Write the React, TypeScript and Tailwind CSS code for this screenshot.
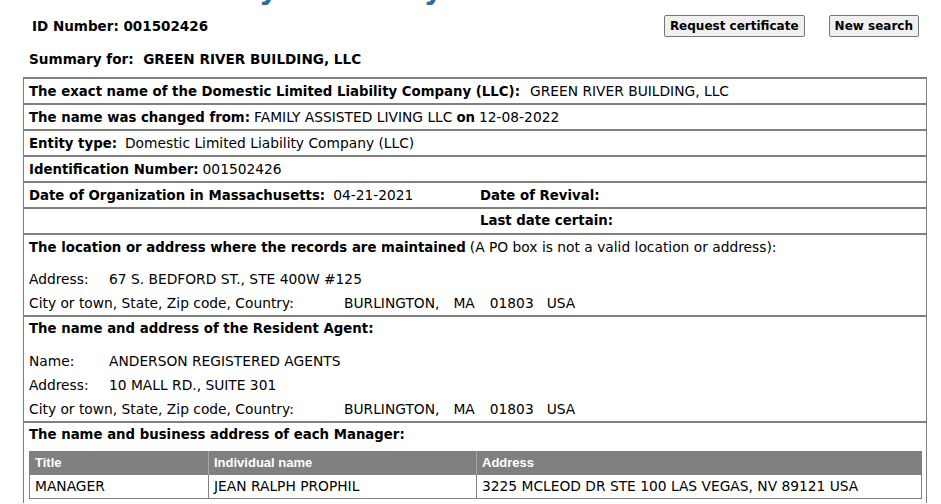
const FONT = "font-['DejaVu_Sans',Verdana,sans-serif]";

const B = ({ children, className = '' }: { children: React.ReactNode; className?: string }) => (
  <b className={`text-[13.3px] font-bold ${className}`}>{children}</b>
);

// one boxed row; inner div keeps bold and plain text on a shared baseline
const Row = ({ children }: { children: React.ReactNode }) => (
  <div className="flex h-[26px] items-center border-b-2 border-[#808080] px-[5px]">
    <div className="flex w-full items-baseline">{children}</div>
  </div>
);

const Line = ({ label, value }: { label: string; value: React.ReactNode }) => (
  <div className="flex h-[24px] items-center">
    <span className="w-[80px]">{label}</span>
    <span>{value}</span>
  </div>
);

const CityLine = () => (
  <div className="flex h-[24px] items-center">
    <span className="w-[315px]">City or town, State, Zip code, Country:</span>
    <span>BURLINGTON,</span>
    <span className="ml-[14px]">MA</span>
    <span className="ml-[15px]">01803</span>
    <span className="ml-[13px]">USA</span>
  </div>
);

export default function App() {
  return (
    <div className={`${FONT} min-h-screen w-[941px] overflow-hidden bg-white text-[13.8px] text-black`}>
      {/* page title, mostly scrolled out of view */}
      <h1 className="-mt-[27px] h-[32px] pl-[26px] text-[29px] font-bold leading-[32px] text-[#2e6b9e]">
        Business Entity Summary
      </h1>

      <div className="mt-[6px] flex h-[30px] items-center pl-[32px] pr-[22px]">
        <B className="text-[13.5px]">ID Number: 001502426</B>
        <div className="ml-auto flex gap-[24px]">
          <button className="h-[22px] rounded-[2px] border border-[#767676] bg-[#efefef] px-[5px] text-[12px] font-bold">
            Request certificate
          </button>
          <button className="h-[22px] rounded-[2px] border border-[#767676] bg-[#efefef] px-[5px] text-[12px] font-bold">
            New search
          </button>
        </div>
      </div>

      <div className="flex h-[36px] items-center pl-[29px] text-[13.6px] font-bold">
        Summary for:&nbsp; GREEN RIVER BUILDING, LLC
      </div>

      <div className="ml-[23px] w-[904px] border-x border-t-2 border-[#808080]">
        <Row>
          <B>The exact name of the Domestic Limited Liability Company (LLC):</B>
          <span className="ml-[10px]">GREEN RIVER BUILDING, LLC</span>
        </Row>
        <Row>
          <B>The name was changed from:</B>
          <span className="ml-[4px]">FAMILY ASSISTED LIVING LLC</span>
          <B className="ml-[4px]">on</B>
          <span className="ml-[4px]">12-08-2022</span>
        </Row>
        <Row>
          <B>Entity type:</B>
          <span className="ml-[8px]">Domestic Limited Liability Company (LLC)</span>
        </Row>
        <Row>
          <B>Identification Number:</B>
          <span className="ml-[4px]">001502426</span>
        </Row>
        <Row>
          <div className="w-[451px]">
            <B>Date of Organization in Massachusetts:</B>
            <span className="ml-[8px]">04-21-2021</span>
          </div>
          <B>Date of Revival:</B>
        </Row>
        <Row>
          <div className="w-[451px]" />
          <B>Last date certain:</B>
        </Row>

        <div className="border-b-2 border-[#808080] px-[5px]">
          <div className="flex h-[24px] items-center">
            <div className="flex items-baseline">
              <B>The location or address where the records are maintained</B>
              <span className="ml-[4px]">(A PO box is not a valid location or address):</span>
            </div>
          </div>
          <div className="mt-[8px]">
            <Line label="Address:" value="67 S. BEDFORD ST., STE 400W #125" />
            <CityLine />
          </div>
        </div>

        <div className="border-b-2 border-[#808080] px-[5px]">
          <div className="flex h-[24px] items-center">
            <B>The name and address of the Resident Agent:</B>
          </div>
          <div className="mt-[8px]">
            <Line label="Name:" value="ANDERSON REGISTERED AGENTS" />
            <Line label="Address:" value="10 MALL RD., SUITE 301" />
            <CityLine />
          </div>
        </div>

        <div className="px-[5px] pb-[4px]">
          <div className="flex h-[24px] items-center">
            <B>The name and business address of each Manager:</B>
          </div>
          <table className="mt-[4px] w-[893px] border-collapse border border-[#808080]">
            <thead>
              <tr className="h-[23px] bg-[#808080] text-left font-['Liberation_Sans',Arial,sans-serif] text-[13px] font-bold text-white">
                <th className="w-[179px] border-r border-[#a6a6a6] px-[5px]">Title</th>
                <th className="w-[268px] border-r border-[#a6a6a6] px-[5px]">Individual name</th>
                <th className="px-[5px]">Address</th>
              </tr>
            </thead>
            <tbody>
              <tr className="h-[24px]">
                <td className="border border-[#808080] px-[5px]">MANAGER</td>
                <td className="border border-[#808080] px-[5px]">JEAN RALPH PROPHIL</td>
                <td className="border border-[#808080] px-[5px]">3225 MCLEOD DR STE 100 LAS VEGAS, NV 89121 USA</td>
              </tr>
            </tbody>
          </table>
        </div>
      </div>
    </div>
  );
}
